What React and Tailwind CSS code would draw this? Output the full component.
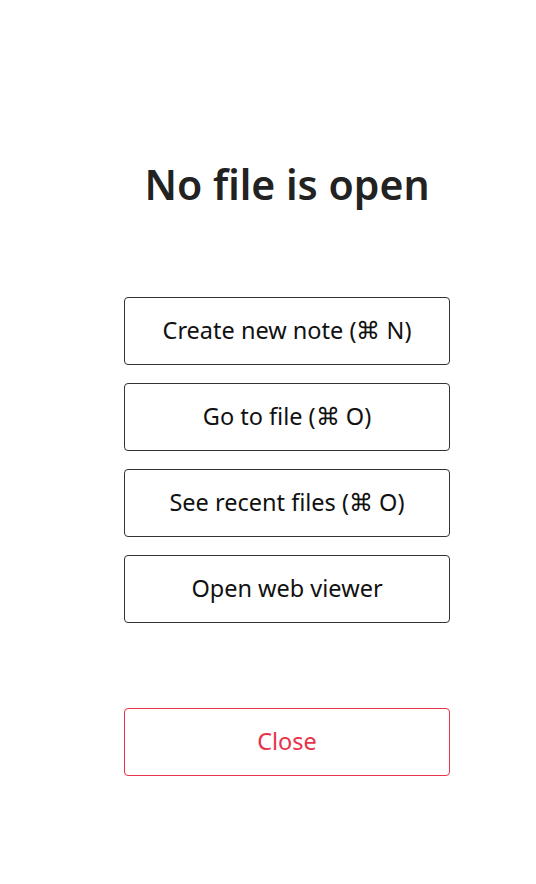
import React from 'react';

const actions = [
  'Create new note (⌘ N)',
  'Go to file (⌘ O)',
  'See recent files (⌘ O)',
  'Open web viewer',
];

const App = () => {
  return (
    <div className="w-[536px] h-[884px] bg-white pl-[38px] flex flex-col items-center font-['Noto_Sans',sans-serif]">
      <h1 className="mt-[152px] text-[41px] leading-[64px] font-semibold text-[#222222]">No file is open</h1>
      <div className="mt-[81px] flex flex-col gap-[18px]">
        {actions.map(label => (
          <button
            key={label}
            className="w-[326px] h-[68px] rounded-[4px] border border-[#333333] bg-white text-[23.5px] text-[#111111]"
          >
            {label}
          </button>
        ))}
      </div>
      <button className="mt-[85px] w-[326px] h-[68px] rounded-[4px] border border-[#e8334a] bg-white text-[23.5px] text-[#e8334a]">
        Close
      </button>
    </div>
  );
};

export default App;
